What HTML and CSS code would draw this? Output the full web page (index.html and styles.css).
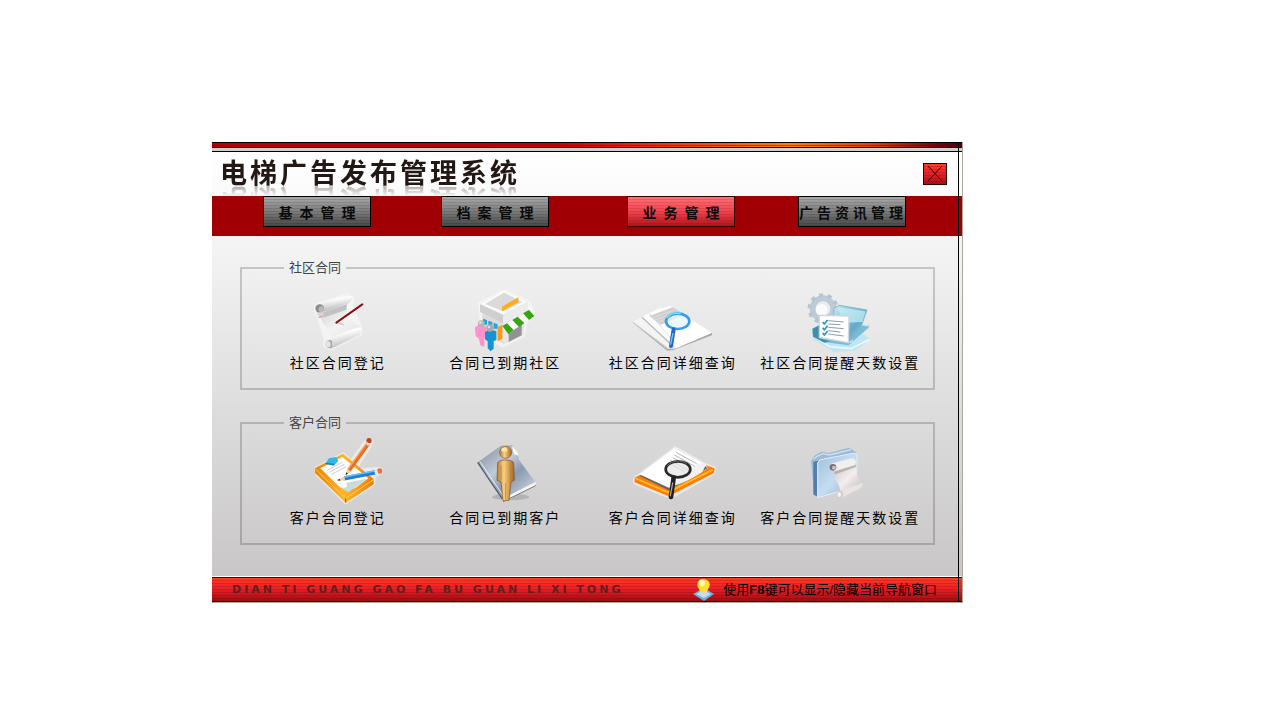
FILE: index.html
```html
<!DOCTYPE html>
<html lang="zh-CN">
<head>
    <meta charset="UTF-8">
    <meta name="viewport" content="width=device-width, initial-scale=1.0">
    <title>电梯广告发布管理系统</title>
    <link rel="stylesheet" href="styles.css">
</head>
<body>
    <div class="window">
        <div class="top-strip"></div>

        <header class="header">
            <h1>电梯广告发布管理系统</h1>
            <button type="button" class="close" aria-label="关闭">
                <svg viewBox="0 0 22 20"><path d="M4 2L18 17M18 2L4 17" stroke="#300" stroke-width="1"/></svg>
            </button>
        </header>

        <nav class="nav">
            <button type="button">基本管理</button>
            <button type="button">档案管理</button>
            <button type="button" class="active">业务管理</button>
            <button type="button" class="long">广告资讯管理</button>
        </nav>

        <main class="content">
            <!-- 社区合同 -->
            <fieldset class="group">
                <legend>社区合同</legend>
                <div class="items">
                    <a href="#" class="item">
                        <svg viewBox="186 78 270 216">
                            <defs>
                                <linearGradient id="roll" x1="0" y1="0" x2="0.3" y2="1">
                                    <stop offset="0" stop-color="#c4c4c4"/><stop offset=".35" stop-color="#fff"/><stop offset="1" stop-color="#b8b8b8"/>
                                </linearGradient>
                                <linearGradient id="sheet" x1="0" y1="0" x2="1" y2="1">
                                    <stop offset="0" stop-color="#cfcfcf"/><stop offset=".5" stop-color="#f4f4f4"/><stop offset="1" stop-color="#e2e2e2"/>
                                </linearGradient>
                            </defs>
                            <path class="glow" d="M252 160L262 147L350 119L365 130L362 150L391 222L389 238L298 282L280 272L282 250L262 188Z"/>
                            <path d="M268 180L346 152C346 180 362 200 391 216L304 252C292 220 270 205 268 180Z" fill="url(#sheet)"/>
                            <path d="M254 160C256 180 264 188 272 192L278 178L280 160Z" fill="#d6d6d6"/>
                            <path d="M262 148L346 120C358 118 364 126 363 136L350 146L280 170Z" fill="url(#roll)"/>
                            <path d="M277 172L348 148L346 164L276 188Z" fill="#c2c2c2"/>
                            <ellipse cx="266" cy="160" rx="13" ry="12" fill="#8c8c8c"/>
                            <ellipse cx="271" cy="163" rx="8" ry="9" fill="#b9b9b9"/>
                            <path d="M262 188L274 183" stroke="#e09090" stroke-width="3"/>
                            <path d="M298 248L386 214C394 220 392 236 386 240L298 282Z" fill="url(#roll)"/>
                            <ellipse cx="293" cy="265" rx="13" ry="15" fill="#eee"/>
                            <path d="M284 270C284 258 296 250 304 258L304 276C298 282 286 280 284 270Z" fill="#a8a8a8"/>
                            <ellipse cx="292" cy="268" rx="7" ry="9" fill="#e4e4e4"/>
                            <path d="M316 205L342 213L330 202Z" fill="#ccc"/>
                            <path d="M316 203L394 148" stroke="#8c1018" stroke-width="6" stroke-linecap="round"/>
                        </svg>
                        <span>社区合同登记</span>
                    </a>
                    <a href="#" class="item">
                        <svg viewBox="93 3 270 216">
                            <path class="glow" d="M152 70L225 30L300 66L314 96L290 128L284 168L220 198L160 160Z"/>
                            <path d="M153 72L225 28L297 66L297 98L222 132L153 96Z" fill="#cfcfcf"/>
                            <path d="M153 72L225 28L297 66L222 104Z" fill="#fafafa"/>
                            <path d="M168 72L225 38L280 66L222 94Z" fill="#dadada"/>
                            <path d="M222 104L297 66V98L222 132Z" fill="#ececec"/>
                            <path d="M219 80L268 52V67L219 94Z" fill="#ffab1c"/>
                            <path d="M160 100L222 130V190L160 158Z" fill="#dcdcdc"/>
                            <path d="M162 116L174 120V134H162ZM178 122L190 126V140H178ZM194 128L206 133V146H194Z" fill="#26a4d8"/>
                            <path d="M206 142L220 134V176L206 184Z" fill="#ff9c14"/>
                            <path d="M222 136L285 112V164L222 194Z" fill="#e6e6e6"/>
                            <path d="M239 154L278 134V166L239 186Z" fill="#929292"/>
                            <path d="M222 143L300 92L315 108L238 161Z" fill="#fff"/>
                            <path d="M220 138L234 130L254 150L238 162ZM250 120L266 110L286 129L270 141ZM282 100L300 90L316 108L300 120Z" fill="#35a512"/>
                            <path d="M138 142L150 134L172 140L174 168L166 174V200L154 196L150 176L140 168Z" fill="#ff91cc"/>
                            <path d="M168 156L182 148L202 154V180L194 184V206L184 214L176 204V184L168 178Z" fill="#1593d6"/>
                            <circle cx="157" cy="131" r="10" fill="#b5b5b5"/>
                            <circle cx="183" cy="144" r="11" fill="#aaa"/>
                            <circle cx="154" cy="128" r="4" fill="#ddd"/>
                            <circle cx="180" cy="141" r="4" fill="#ddd"/>
                        </svg>
                        <span>合同已到期社区</span>
                    </a>
                    <a href="#" class="item">
                        <svg viewBox="78 3 270 216">
                            <path d="M92 128L196 212L214 210L330 166V158L220 206L198 206Z" fill="#aaa"/>
                            <path d="M92 126L136 102L230 170L196 206Z" fill="#f4f4f4"/>
                            <path d="M92 126L196 204" stroke="#c6c6c6" stroke-width="3"/>
                            <path d="M120 112L176 82L280 150L206 194Z" fill="#fbfbfb"/>
                            <path d="M120 112L206 192" stroke="#bbb" stroke-width="4"/>
                            <path d="M142 100L202 78L330 158L222 204Z" fill="#fff"/>
                            <path d="M142 100L222 192" stroke="#ccc" stroke-width="2"/>
                            <path d="M142 108L212 82L250 104L176 134Z" fill="#cfcfcf"/>
                            <path d="M150 114L218 90M158 120L226 96M166 127L234 100" stroke="#e6e6e6" stroke-width="2"/>
                            <ellipse cx="227" cy="124" rx="35" ry="23" fill="#e5f4ff" fill-opacity=".75" stroke="#319cf2" stroke-width="8"/>
                            <path d="M194 115C202 101 220 98 236 101" fill="none" stroke="#67e0ff" stroke-width="5"/>
                            <path d="M215 148L207 198" stroke="#2266c9" stroke-width="12" stroke-linecap="round"/>
                            <path d="M213 160L206 192" stroke="#79c8f5" stroke-width="4" stroke-linecap="round"/>
                        </svg>
                        <span>社区合同详细查询</span>
                    </a>
                    <a href="#" class="item">
                        <svg viewBox="132 63 270 216">
                            <defs>
                                <linearGradient id="glass" x1="0" y1="0" x2="1" y2="1">
                                    <stop offset="0" stop-color="#c9eaf5"/><stop offset=".6" stop-color="#64a9c8"/><stop offset="1" stop-color="#a5d9ed"/>
                                </linearGradient>
                            </defs>
                            <circle cx="216" cy="146" r="31" fill="none" stroke="#bccbd6" stroke-width="18"/>
                            <circle cx="216" cy="146" r="41" fill="none" stroke="#b4c5d1" stroke-width="11" stroke-dasharray="12 13.76"/>
                            <circle cx="212" cy="150" r="18" fill="#fff" fill-opacity=".8"/>
                            <path d="M188 222L324 192L358 196L334 220L358 238L312 272L250 276L186 238Z" fill="#bde5f2"/>
                            <path d="M190 230L236 260L300 266L356 238" fill="none" stroke="#eafaff" stroke-width="5"/>
                            <path d="M182 216L220 246L292 256L356 200L324 196L302 250Z" fill="#79bcd6"/>
                            <path d="M248 146L264 136L348 150L320 228L290 246L250 240Z" fill="url(#glass)" stroke="#80b9d1" stroke-width="3"/>
                            <path d="M258 142L344 154L334 186L280 188Z" fill="#c4edf6" fill-opacity=".75"/>
                            <path d="M184 206L204 196V234L236 244L220 248L186 230Z" fill="#3d8fae"/>
                            <path d="M205 166L294 168L292 248L205 232Z" fill="#fff" stroke="#d1d5dc" stroke-width="4"/>
                            <path d="M232 182L278 186M232 192L268 194M232 202L278 206M232 212L268 216M232 222L278 228" stroke="#8e9cad" stroke-width="3"/>
                            <path d="M215 186L220 192L230 180M215 203L220 209L230 197M215 219L220 225L230 213" fill="none" stroke="#2793b8" stroke-width="5"/>
                        </svg>
                        <span>社区合同提醒天数设置</span>
                    </a>
                </div>
            </fieldset>

            <!-- 客户合同 -->
            <fieldset class="group">
                <legend>客户合同</legend>
                <div class="items">
                    <a href="#" class="item">
                        <svg viewBox="186 75 270 216">
                            <defs>
                                <linearGradient id="board" x1="0" y1="0" x2="1" y2="0">
                                    <stop offset="0" stop-color="#e98407"/><stop offset=".5" stop-color="#ffb42a"/><stop offset="1" stop-color="#ef7e08"/>
                                </linearGradient>
                            </defs>
                            <path class="glow" d="M252 172L336 128L360 150L408 86L422 88L418 105L372 176L446 172L456 180L430 196L428 220L344 276L256 190Z"/>
                            <path d="M251 172L336 128L428 204V220L344 275L252 186Z" fill="url(#board)"/>
                            <path d="M251 172L344 262L428 206" fill="none" stroke="#ffcf4a" stroke-width="3"/>
                            <path d="M344 262V275" stroke="#b95a00" stroke-width="3"/>
                            <path d="M268 172L334 138L412 202L372 232L328 230Z" fill="#fff"/>
                            <path d="M328 230C350 234 352 222 344 216L412 202L352 244Z" fill="#c7ddd8"/>
                            <path d="M288 178L334 154M294 184L340 160M300 191L346 167" stroke="#d0c9d6" stroke-width="3"/>
                            <path d="M282 158L294 142L316 138L322 150L308 164Z" fill="#31b8e4"/>
                            <path d="M284 158L310 160" stroke="#156b91" stroke-width="3"/>
                            <path d="M354 178L412 98" stroke="#e86f20" stroke-width="12"/>
                            <path d="M351 174L406 98" stroke="#ffa55c" stroke-width="4"/>
                            <path d="M344 192L348 174L360 182Z" fill="#efd29b"/>
                            <circle cx="414" cy="89" r="8" fill="#be4520"/>
                            <path d="M408 102L413 96" stroke="#ddd" stroke-width="10"/>
                            <path d="M340 202L432 184" stroke="#1f7edb" stroke-width="13"/>
                            <path d="M340 198L430 180" stroke="#6bc0ff" stroke-width="4"/>
                            <path d="M320 208L340 196L342 209Z" fill="#efd29b"/>
                            <path d="M318 208L326 203L328 209ZM344 192L346 184L351 188Z" fill="#222"/>
                            <circle cx="446" cy="180" r="8" fill="#e8713e"/>
                            <path d="M431 184L440 182" stroke="#e5e5e5" stroke-width="11"/>
                        </svg>
                        <span>客户合同登记</span>
                    </a>
                    <a href="#" class="item">
                        <svg viewBox="93 15 270 216">
                            <defs>
                                <linearGradient id="steel" x1="0" y1="0" x2="1" y2="1">
                                    <stop offset="0" stop-color="#7c879b"/><stop offset=".4" stop-color="#c0cad8"/><stop offset=".6" stop-color="#8b9ab0"/><stop offset="1" stop-color="#dbe2eb"/>
                                </linearGradient>
                                <linearGradient id="gold" x1="0" y1="0" x2="1" y2="0">
                                    <stop offset="0" stop-color="#bb7b31"/><stop offset=".4" stop-color="#f8d082"/><stop offset="1" stop-color="#a6641f"/>
                                </linearGradient>
                            </defs>
                            <ellipse cx="245" cy="198" rx="56" ry="10" fill="#888" fill-opacity=".4"/>
                            <path d="M218 204L322 152L316 166L226 212Z" fill="#f6f6f6"/>
                            <path d="M222 212L320 164" stroke="#777" stroke-width="3"/>
                            <path d="M146 94L216 44L250 42L256 66L270 72L268 84L318 152L220 204Z" fill="url(#steel)"/>
                            <path d="M146 94L220 204" stroke="#505a6c" stroke-width="4"/>
                            <path d="M153 92L224 196" stroke="#e6eaf0" stroke-width="3"/>
                            <path d="M248 46L262 60L270 74L256 70Z" fill="#fff"/>
                            <path d="M206 96C208 84 252 84 254 96L256 148L246 152L240 208L222 210L216 152L204 148Z" fill="url(#gold)" stroke="#805022" stroke-width="2"/>
                            <path d="M216 104V148M245 104V148M230 156V206" stroke="#b07a38" stroke-width="2"/>
                            <circle cx="230" cy="64" r="18" fill="url(#gold)" stroke="#8c5a25" stroke-width="2"/>
                            <ellipse cx="226" cy="56" rx="9" ry="6" fill="#ffe7aa"/>
                        </svg>
                        <span>合同已到期客户</span>
                    </a>
                    <a href="#" class="item">
                        <svg viewBox="78 15 270 216">
                            <path class="glow" d="M98 142L220 50L310 100L338 112L336 126L214 196L190 194L98 156Z"/>
                            <path d="M98 140L118 130L202 176L318 112L310 102L338 112L336 126L200 196L98 154Z" fill="#ff7c0c"/>
                            <path d="M100 142L198 184L332 116" fill="none" stroke="#ffc321" stroke-width="5"/>
                            <path d="M112 134L200 178L316 112L300 96Z" fill="#66615e"/>
                            <path d="M112 130L218 52L312 102L200 170Z" fill="#fff"/>
                            <path d="M200 170C230 160 262 148 276 138L300 124L312 102L290 96Z" fill="#f1f1f1"/>
                            <path d="M222 64L284 98M217 72L278 106M212 80L268 110M205 88L262 120M200 96L246 122" stroke="#b5b5b5" stroke-width="3"/>
                            <ellipse cx="228" cy="115" rx="37" ry="24" fill="#e6e6e6" fill-opacity=".75" stroke="#292929" stroke-width="8"/>
                            <path d="M196 104C208 88 238 86 254 98" fill="none" stroke="#8c8c8c" stroke-width="2"/>
                            <path d="M215 140L207 198" stroke="#202020" stroke-width="14" stroke-linecap="round"/>
                            <path d="M212 156L205 194" stroke="#a5a5a5" stroke-width="4" stroke-linecap="round"/>
                        </svg>
                        <span>客户合同详细查询</span>
                    </a>
                    <a href="#" class="item">
                        <svg viewBox="132 15 270 216">
                            <defs>
                                <linearGradient id="folder" x1="0" y1="0" x2="1" y2="1">
                                    <stop offset="0" stop-color="#9fc0de"/><stop offset=".5" stop-color="#c6dcf0"/><stop offset="1" stop-color="#8db0d2"/>
                                </linearGradient>
                                <linearGradient id="parchment" x1="0" y1="0" x2="1" y2="1">
                                    <stop offset="0" stop-color="#c4bcbc"/><stop offset=".5" stop-color="#f3eeee"/><stop offset="1" stop-color="#bbb1b2"/>
                                </linearGradient>
                            </defs>
                            <path d="M180 90L192 72L212 62L234 66L294 50L316 64V160L190 194Z" fill="#9dbbd7"/>
                            <path d="M188 84L198 76L216 68L236 72L300 56" fill="none" stroke="#cfe2f1" stroke-width="4"/>
                            <path d="M187 92V190L200 198V96L214 86Z" fill="#507fa9"/>
                            <path d="M200 96Q202 88 210 86L310 66Q320 66 318 78L316 166L200 200Z" fill="url(#folder)" stroke="#e2effa" stroke-width="3"/>
                            <path d="M236 108L250 124C246 146 266 156 268 180L262 196L290 192L334 164C318 148 320 120 312 98Z" fill="url(#parchment)"/>
                            <path d="M250 122L314 102L315 108L252 130Z" fill="#8e8485" fill-opacity=".5"/>
                            <path d="M240 98L302 82Q318 84 314 100L252 120Z" fill="#f1eeee"/>
                            <ellipse cx="246" cy="109" rx="10" ry="10" fill="#777173"/>
                            <ellipse cx="249" cy="110" rx="6" ry="6" fill="#c9c1c2"/>
                            <path d="M270 180L332 156Q338 162 330 170L270 202Z" fill="#e9e3e4"/>
                            <ellipse cx="267" cy="190" rx="10" ry="12" fill="#d4cccd"/>
                            <ellipse cx="265" cy="191" rx="5" ry="7" fill="#f8f5f5"/>
                        </svg>
                        <span>客户合同提醒天数设置</span>
                    </a>
                </div>
            </fieldset>
        </main>

        <footer class="footer">
            <span class="pinyin">DIAN TI GUANG GAO FA BU GUAN LI XI TONG</span>
            <p class="tip">
                <svg viewBox="0 0 22 24">
                    <path d="M0 16L11 10L21 16L11 23Z" fill="#62b4e0"/>
                    <path d="M3 16L11 12L18 16L11 20Z" fill="#b4e2f6"/>
                    <path d="M7 13H14V17Q10 20 7 17Z" fill="#d8d8d8"/>
                    <path d="M10 1C4 1 3 8 6 11L7 14H14L15 11C19 7 16 1 10 1Z" fill="#ffe02c"/>
                    <ellipse cx="9" cy="5" rx="3" ry="3" fill="#fffbbd"/>
                </svg>
                <span>使用<b>F8</b>键可以显示/隐藏当前导航窗口</span>
            </p>
        </footer>
    </div>
</body>
</html>
```

FILE: styles.css
```css
* {
    box-sizing: border-box;
}
body {
    margin: 0;
    padding: 142px 24px 24px 212px;
    background: #fff;
    color: #000;
    font-family: "Liberation Sans", "Noto Sans CJK SC", sans-serif;
}
button {
    padding: 0;
    font-family: inherit;
    cursor: pointer;
}
.window {
    position: relative;
    max-width: 751px;
    border-right: 1px solid #aca899;
    border-bottom: 1px solid #aca899;
}
/* thin frame line that runs over every band */
.window::after {
    content: "";
    position: absolute;
    top: 0;
    right: 3px;
    bottom: 0;
    border-right: 1px solid #000;
    pointer-events: none;
}
.top-strip {
    height: 10px;
    background:
        linear-gradient(#000 1px, transparent 1px, transparent 3px, rgba(90, 0, 0, 0.4) 3px, rgba(90, 0, 0, 0.4) 4px, transparent 4px, transparent 5px, #300 5px, #300 6px, #d0d0d0 6px, #d0d0d0 9px, #000 9px),
        linear-gradient(to right, #b80008 0%, #c00008 45%, #e82010 55%, #ff7a18 77%, #e04010 88%, #700010 97%, #500010 100%);
}
.header {
    display: flex;
    align-items: center;
    justify-content: space-between;
    height: 44px;
    padding: 0 15px 0 8px;
    background: linear-gradient(#fff, #fafafa);
}
h1 {
    margin: 0;
    color: #231815;
    font-size: 27px;
    line-height: 32px;
    letter-spacing: 3px;
    white-space: nowrap;
    -webkit-box-reflect: below -8px linear-gradient(transparent 55%, rgba(0, 0, 0, 0.5));
}
.close {
    width: 24px;
    height: 22px;
    border: 1px solid #200;
    background:
        repeating-linear-gradient(transparent 0, transparent 2px, rgba(80, 0, 0, 0.18) 2px, rgba(80, 0, 0, 0.18) 3px),
        linear-gradient(#ff3b28, #e8222a 50%, #b00c10);
}
.close svg {
    display: block;
    width: 22px;
    height: 20px;
}
.nav {
    display: grid;
    grid-template-columns: 178fr 178fr 194fr 148fr;
    justify-items: center;
    align-items: start;
    height: 40px;
    padding: 0 36px 0 16px;
    background: #a00004;
}
.nav button {
    width: 108px;
    height: 31px;
    border: 1px solid #000;
    background:
        repeating-linear-gradient(transparent 0, transparent 2px, rgba(0, 0, 0, 0.12) 2px, rgba(0, 0, 0, 0.12) 3px),
        linear-gradient(#a8a8a8, #7c7c7c 50%, #484848);
    color: #0a0a0a;
    font-size: 14px;
    font-weight: bold;
    letter-spacing: 7px;
    text-indent: 7px;
    white-space: nowrap;
}
.nav .active {
    border-color: #300;
    background:
        repeating-linear-gradient(transparent 0, transparent 2px, rgba(120, 0, 0, 0.14) 2px, rgba(120, 0, 0, 0.14) 3px),
        linear-gradient(#ff7078, #f04450 50%, #b01418);
}
.nav .long {
    letter-spacing: 4px;
    text-indent: 0;
}
.content {
    display: flex;
    flex-direction: column;
    gap: 24px;
    padding: 23px 27px 31px 28px;
    border-bottom: 1px solid #fff;
    background: linear-gradient(#f5f5f5, #c8c6c7);
}
.group {
    min-width: 0;
    margin: 0;
    padding: 4px 9px 15px 12px;
    border: 2px solid rgba(0, 0, 0, 0.18);
}
legend {
    margin-left: 30px;
    padding: 0 5px;
    color: #444;
    font-size: 13px;
    line-height: 18px;
}
.items {
    display: grid;
    grid-template-columns: repeat(4, minmax(0, 1fr));
}
.item {
    display: flex;
    flex-direction: column;
    align-items: center;
    color: #000;
    font-size: 14px;
    line-height: 20px;
    letter-spacing: 2px;
    text-decoration: none;
    white-space: nowrap;
}
.item svg {
    width: 90px;
    height: 72px;
}
.glow {
    fill: #fff;
    stroke: #fff;
    stroke-width: 8px;
    stroke-linejoin: round;
    opacity: 0.5;
}
.footer {
    display: flex;
    align-items: center;
    justify-content: space-between;
    height: 25px;
    padding: 0 25px 0 20px;
    border-top: 1px solid #301018;
    border-bottom: 1px solid #000;
    background:
        repeating-linear-gradient(transparent 0, transparent 2px, rgba(80, 0, 0, 0.16) 2px, rgba(80, 0, 0, 0.16) 3px),
        linear-gradient(#ff3a20, #ec2028 45%, #a00c10);
}
.pinyin {
    color: #602020;
    font-family: "DejaVu Sans", sans-serif;
    font-size: 11px;
    font-weight: bold;
    letter-spacing: 3px;
    white-space: nowrap;
}
.tip {
    display: flex;
    align-items: center;
    gap: 8px;
    margin: 0;
    font-size: 13px;
    line-height: 20px;
    white-space: nowrap;
}
.tip svg {
    width: 22px;
    height: 24px;
}
```
